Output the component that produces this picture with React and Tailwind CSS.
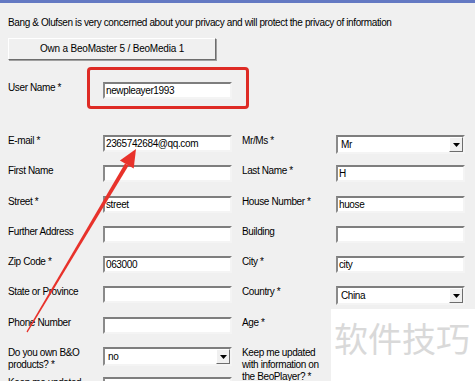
/* sunken Win-classic text box */
function TextBox({ value = '', className = '' }) {
  return (
    <div
      className={`h-[17px] w-[129px] bg-white border-2 border-t-[#7e7e7e] border-l-[#8a8a8a] border-r-[#f4f4f4] border-b-[#f4f4f4] pl-[1px] leading-[13px] whitespace-nowrap overflow-hidden ${className}`}
    >
      {value}
    </div>
  );
}

/* combo box with the little drop button */
function Combo({ value = '' }) {
  return (
    <div className="h-[19px] w-[129px] bg-white border-2 border-t-[#7e7e7e] border-l-[#8a8a8a] border-r-[#f4f4f4] border-b-[#f4f4f4] flex items-stretch">
      <span className="flex-1 pl-[3px] leading-[15px]">{value}</span>
      <span className="w-[14px] bg-[#f0f0f0] border border-t-white border-l-white border-r-[#6d6d6d] border-b-[#6d6d6d] flex items-center justify-center">
        <svg width="7" height="4" viewBox="0 0 7 4">
          <path d="M0 0h7L3.5 4z" fill="#000" />
        </svg>
      </span>
    </div>
  );
}

function Label({ children }) {
  return <div className="leading-[12px] pr-1">{children}</div>;
}

const rows = [
  ['E-mail *', <TextBox value="2365742684@qq.com" />, 'Mr/Ms *', <Combo value="Mr" />],
  ['First Name', <TextBox />, 'Last Name *', <TextBox value="H" />],
  ['Street *', <TextBox value="street" />, 'House Number *', <TextBox value="huose" />],
  ['Further Address', <TextBox />, 'Building', <TextBox />],
  ['Zip Code *', <TextBox value="063000" />, 'City *', <TextBox value="city" />],
  ['State or Province', <TextBox />, 'Country *', <Combo value="China" />],
  ['Phone Number', <TextBox />, 'Age *', <TextBox />],
  ['Do you own B&O products? *', <Combo value="no" />, 'Keep me updated with information on the BeoPlayer? *', <Combo value="" />],
  ['Keep me updated', <TextBox />, '', null],
];

export default function App() {
  return (
    <div className="relative w-[475px] h-[381px] overflow-hidden bg-[#f0f0f0] text-black text-[10px] tracking-[-0.38px] font-['Liberation_Sans',Arial,sans-serif]">
      <div className="h-[3px] bg-[#6479c3]" />

      <div className="px-2">
        <p className="mt-[14px] leading-[12px] whitespace-nowrap">
          Bang &amp; Olufsen is very concerned about your privacy and will protect the privacy of information
        </p>

        <button className="mt-[9px] h-[22px] w-[208px] bg-[#f0f0f0] border border-t-white border-l-white border-r-[#6d6d6d] border-b-[#6d6d6d] shadow-[1px_1px_0_#a0a0a0] text-[10px] leading-[18px] tracking-[-0.2px]">
          Own a BeoMaster 5 / BeoMedia 1
        </button>

        {/* user name row with the red annotation box */}
        <div className="relative mt-[7px] h-[42px] pt-[15px] flex">
          <div className="w-[95px]">
            <Label>User Name *</Label>
          </div>
          <TextBox value="newpleayer1993" />
          <div className="absolute left-[79px] top-0 w-[162px] h-[42px] border-[3px] border-[#de2b25] rounded-[4px]" />
        </div>

        {/* main form */}
        <div className="mt-[26px] grid grid-cols-[95px_129px_10px_94px_129px] auto-rows-[30.3px]">
          {rows.map(([l1, f1, l2, f2], i) => (
            <div key={i} className="contents">
              <Label>{l1}</Label>
              <div>{f1}</div>
              <div />
              <Label>{l2}</Label>
              <div>{f2}</div>
            </div>
          ))}
        </div>
      </div>

      {/* red arrow pointing at the e-mail box */}
      <svg className="absolute left-0 top-0 pointer-events-none" width="475" height="381" viewBox="0 0 475 381">
        <polygon points="26.5,331.6 27.5,332.4 128.6,165.6 125.0,163.4" fill="#e8322b" />
        <polygon points="136,149 119.9,160.4 133.7,168.6" fill="#e8322b" />
      </svg>

      {/* watermark */}
      <div className="absolute left-[331px] top-[309px] w-[144px] h-[72px] bg-white pl-[3px] pt-[11px]">
        <span className="text-[34px] leading-[36px] tracking-normal text-[#d9d9d9] font-['Noto_Sans_CJK_SC',sans-serif] whitespace-nowrap">
          软件技巧
        </span>
      </div>
    </div>
  );
}
